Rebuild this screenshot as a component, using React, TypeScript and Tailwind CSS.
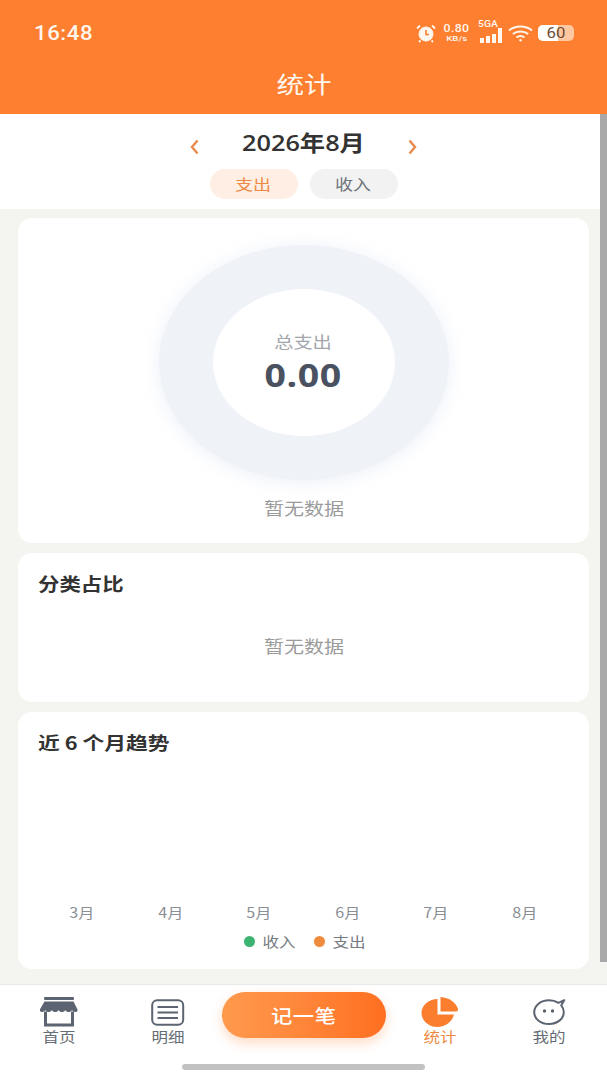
import React from 'react';

const cjk = { fontFamily: '"Noto Sans CJK SC", "Noto Sans", sans-serif' };

const months = ['3月', '4月', '5月', '6月', '7月', '8月'];

const ShopIcon = () => (
  <svg width="38" height="30" viewBox="0 0 38 30" fill="none">
    <rect x="4" y="0" width="30" height="3" rx="1" fill="#5b6470" />
    <path d="M4.500 4.500h29L37.500 12.500c.4 1.500-.6 2.500-2 2.500-2 0-3-1-3.500-2-.7 1.500-2 2-3.300 2-1.500 0-2.700-.6-3.300-2-.7 1.500-2 2-3.400 2-1.400 0-2.700-.6-3.400-2-.7 1.500-2 2-3.400 2-1.400 0-2.700-.6-3.300-2-.7 1.500-2 2-3.300 2-1.400 0-2.700-.6-3.300-2-.5 1.200-1.700 2-3.400 2-1.500 0-2.500-1-2-2.500z" fill="#5b6470" />
    <path d="M5.500 14.500V28h27V14.500" stroke="#5b6470" strokeWidth="3" />
  </svg>
);

const ListIcon = () => (
  <svg width="34" height="27" viewBox="0 0 34 27" fill="none" stroke="#5b6470">
    <rect x="1.200" y="1.200" width="31" height="24.600" rx="5" strokeWidth="2" />
    <path d="M6.500 8h20.500M6.500 13.500h20.500M6.500 19h20.500" strokeWidth="2" />
  </svg>
);

const PieIcon = () => (
  <svg width="38" height="30" viewBox="0 0 38 30" fill="#fb7d2e">
    <path d="M16.500 2C7.500 2 .5 8.500 .5 16s7 14 16 14c8.500 0 15-6 16.500-12.500H16.500z" />
    <path d="M19.500 0C28 .5 35 5.500 37 12c.3 1.500-.5 2.500-2 2.500H19.500z" />
  </svg>
);

const ChatIcon = () => (
  <svg width="33" height="26" viewBox="0 0 33 26" fill="none">
    <path d="M25.500 3.800C23 2.200 19.800 1.200 16 1.200 7.800 1.200 1.200 6.500 1.200 13.300S7.800 25 16 25s14.800-5 14.800-11.700c0-2.800-.9-5-2.600-6.900l3-5.200z" stroke="#5b6470" strokeWidth="2" strokeLinejoin="round" />
    <circle cx="11.500" cy="12" r="1.700" fill="#5b6470" />
    <circle cx="19.500" cy="12" r="1.700" fill="#5b6470" />
  </svg>
);

const AlarmIcon = () => (
  <svg width="20" height="19" viewBox="0 0 20 19" fill="none" stroke="#fff6ee">
    <circle cx="10" cy="10" r="7" fill="#fff6ee" />
    <path d="M10 6v4.500h3" stroke="#fb7d2e" strokeWidth="1.600" />
    <path d="M1 4.500 4 1.500M19 4.500 16 1.500M4.500 16.500 3 18M15.500 16.500 17 18" strokeWidth="1.800" />
  </svg>
);

const WifiIcon = () => (
  <svg width="25" height="17" viewBox="0 0 25 17" fill="none" stroke="#fff6ee" strokeWidth="2">
    <path d="M1 5.500C7.500 .2 17.500 .2 24 5.500" />
    <path d="M4.800 9C9 5.700 16 5.700 20.200 9" />
    <path d="M8.500 12.500c2.300-1.700 5.700-1.700 8 0" />
    <circle cx="12.500" cy="15.300" r="1.200" fill="#fff6ee" stroke="none" />
  </svg>
);

const SignalBars = () => (
  <div className="flex items-end gap-[2px] h-[15px]">
    <div className="w-[4px] h-[5px] bg-[#fff6ee]" />
    <div className="w-[4px] h-[7px] bg-[#fff6ee]" />
    <div className="w-[4px] h-[9px] bg-[#fff6ee]" />
    <div className="w-[4px] h-[15px] bg-[#fff6ee]" />
  </div>
);

const Card: React.FC<{ className: string; children: React.ReactNode }> = ({ className, children }) => (
  <div className={`bg-white rounded-[14px] ${className}`}>{children}</div>
);

const NavItem: React.FC<{ icon: React.ReactNode; label: string; active?: boolean }> = ({ icon, label, active }) => (
  <div className="w-[90px] flex flex-col items-center">
    <div className="h-[30px] flex items-center justify-center">{icon}</div>
    <span className={`inline-block scale-x-[1.18] text-[14px] leading-[18px] ${active ? 'text-[#ef8a45]' : 'text-[#666c74]'}`}>{label}</span>
  </div>
);

export default function App() {
  return (
    <div className="relative w-[607px] h-[1080px] overflow-hidden flex flex-col bg-[#f4f4f0]" style={cjk}>
      {/* Header */}
      <header className="h-[114px] shrink-0 bg-[#fe7f2f] text-white">
        <div className="h-[66px] pl-[34px] pr-[33px] flex items-center justify-between">
          <span className="inline-block origin-left scale-x-[1.11] text-[20px] font-medium tracking-[0.5px] text-[#fff6ee]" style={{ fontFamily: 'Roboto, sans-serif' }}>16:48</span>
          <div className="flex items-center text-[#fff6ee]" style={{ fontFamily: 'Roboto, sans-serif' }}>
            <AlarmIcon />
            <div className="ml-[7px] w-[28px] flex flex-col items-center font-medium">
              <span className="inline-block scale-x-[1.12] text-[11px] leading-[11px] tracking-[0.3px]">0.80</span>
              <span className="inline-block scale-x-[1.2] text-[8px] leading-[10px]">KB/s</span>
            </div>
            <div className="relative ml-[7px] w-[24px] h-[20px] flex items-end justify-end">
              <span className="absolute left-0 top-[-4px] origin-left scale-x-[1.15] text-[9px] leading-[10px] font-medium">5GA</span>
              <SignalBars />
            </div>
            <div className="ml-[6px]"><WifiIcon /></div>
            <div className="ml-[5px] w-[36px] h-[16px] rounded-[5px] bg-[#ffc7a0] overflow-hidden relative">
              <div className="h-full w-[20px] bg-white" />
              <span className="absolute inset-0 text-center scale-x-[1.2] text-[14px] leading-[16px] font-normal text-[#6e4d38]">60</span>
            </div>
          </div>
        </div>
        <h1 className="text-center text-[23px] leading-[36px] -mt-[1px] text-[#fff6ee] font-normal">
          <span className="inline-block scale-x-[1.2]">统计</span>
        </h1>
      </header>

      {/* Month selector */}
      <section className="h-[95px] shrink-0 bg-white flex flex-col items-center">
        <div className="w-[227px] h-[55px] flex items-center justify-between">
          <svg width="9" height="16" viewBox="0 0 9 16" fill="none" stroke="#e98a4e" strokeWidth="2.400" className="mt-[10px]"><path d="M7.500 1.500 2 8l5.500 6.500" /></svg>
          <span className="inline-block scale-x-[1.15] text-[22px] leading-[30px] font-semibold text-[#333333]" style={{ fontFamily: '"Open Sans", "Noto Sans CJK SC", sans-serif' }}>2026年8月</span>
          <svg width="9" height="16" viewBox="0 0 9 16" fill="none" stroke="#e98a4e" strokeWidth="2.400" className="mt-[10px]"><path d="M1.500 1.500 7 8l-5.500 6.500" /></svg>
        </div>
        <div className="flex gap-[12px]">
          <div className="w-[88px] h-[30px] rounded-full bg-[#feeee3] text-[#ef8a45] text-[15px] leading-[30px] text-center"><span className="inline-block scale-x-[1.2]">支出</span></div>
          <div className="w-[88px] h-[30px] rounded-full bg-[#f2f2f2] text-[#70757c] text-[15px] leading-[30px] text-center"><span className="inline-block scale-x-[1.2]">收入</span></div>
        </div>
      </section>

      {/* Cards */}
      <main className="flex-1 px-[18px] pt-[9px] flex flex-col gap-[10px]">
        <Card className="h-[325px] flex flex-col items-center pt-[27px]">
          <div className="w-[290px] h-[235px] rounded-[50%] bg-[#eff2f7] shadow-[0_2px_18px_rgba(228,234,246,0.7)] flex items-center justify-center">
            <div className="w-[182px] h-[147px] rounded-[50%] bg-white flex flex-col items-center pt-[40px]">
              <span className="inline-block scale-x-[1.2] text-[16px] leading-[24px] text-[#a3a6ad]">总支出</span>
              <span className="inline-block scale-x-[1.17] text-[32px] leading-[44px] font-bold text-[#4a5160] tracking-[0.5px]" style={{ fontFamily: '"Open Sans", sans-serif' }}>0.00</span>
            </div>
          </div>
          <span className="inline-block scale-x-[1.18] mt-[15px] text-[17px] leading-[26px] text-[#9b9b9b]">暂无数据</span>
        </Card>

        <Card className="h-[149px] px-[20px] pt-[17px] flex flex-col">
          <h2 className="origin-left scale-x-[1.19] text-[18px] leading-[26px] font-semibold text-[#333333]">分类占比</h2>
          <p className="mt-[37px] text-center text-[17px] leading-[26px] text-[#9b9b9b]"><span className="inline-block scale-x-[1.18]">暂无数据</span></p>
        </Card>

        <Card className="h-[257px] px-[20px] pt-[17px] flex flex-col">
          <h2 className="origin-left scale-x-[1.21] text-[18px] leading-[26px] font-semibold text-[#333333]">近 6 个月趋势</h2>
          <div className="mt-[147px] flex">
            {months.map(m => (
              <span key={m} className="flex-1 text-center text-[14px] leading-[20px] text-[#8a8e95]"><span className="inline-block scale-x-[1.15]">{m}</span></span>
            ))}
          </div>
          <div className="mt-[9px] flex justify-center items-center">
            <span className="w-[11px] h-[11px] rounded-full bg-[#3cb371]" />
            <span className="inline-block scale-x-[1.18] ml-[10px] text-[14px] leading-[20px] text-[#777b82]">收入</span>
            <span className="ml-[21px] w-[11px] h-[11px] rounded-full bg-[#f08a3c]" />
            <span className="inline-block scale-x-[1.18] ml-[10px] text-[14px] leading-[20px] text-[#777b82]">支出</span>
          </div>
        </Card>
      </main>

      {/* Tab bar */}
      <nav className="h-[96px] shrink-0 bg-white border-t border-[#e8e8e8] relative">
        <div className="flex items-start pl-[14px] pt-[12px]">
          <NavItem icon={<ShopIcon />} label="首页" />
          <div className="ml-[19px]"><NavItem icon={<ListIcon />} label="明细" /></div>
          <div className="ml-[9px] w-[164px] h-[46px] -mt-[5px] rounded-full bg-gradient-to-r from-[#ff9a4d] to-[#ff6f1f] shadow-[0_5px_12px_rgba(255,127,47,0.28)] flex items-center justify-center text-white text-[18px] font-medium tracking-[0.5px]"><span className="inline-block scale-x-[1.18]">记一笔</span></div>
          <div className="ml-[9px]"><NavItem icon={<PieIcon />} label="统计" active /></div>
          <div className="ml-[19px]"><NavItem icon={<ChatIcon />} label="我的" /></div>
        </div>
        <div className="absolute left-[182px] bottom-[10px] w-[243px] h-[6px] rounded-full bg-[#c2c2c2]" />
      </nav>

      {/* Scroll bar */}
      <div className="absolute right-0 top-[114px] w-[7px] h-[848px] bg-[#a8a8a8]" />
    </div>
  );
}
